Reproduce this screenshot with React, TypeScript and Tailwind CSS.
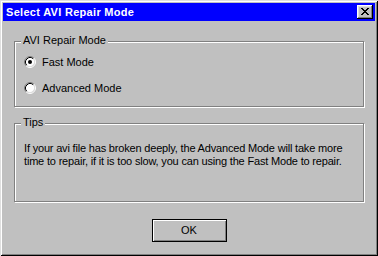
import { useState } from 'react'

function Radio({ checked }: { checked: boolean }) {
  return (
    <svg width="12" height="12" viewBox="0 0 12 12" className="shrink-0">
      <circle cx="6" cy="6" r="4.5" fill="#fff" />
      <path d="M2.11 9.89 A5.5 5.5 0 0 1 9.89 2.11" fill="none" stroke="#808080" strokeWidth="1" />
      <path d="M9.89 2.11 A5.5 5.5 0 0 1 2.11 9.89" fill="none" stroke="#fff" strokeWidth="1" />
      <path d="M2.82 9.18 A4.5 4.5 0 0 1 9.18 2.82" fill="none" stroke="#000" strokeWidth="1" />
      <path d="M9.18 2.82 A4.5 4.5 0 0 1 2.82 9.18" fill="none" stroke="#dfdfdf" strokeWidth="1" />
      {checked && <circle cx="6" cy="6" r="2" fill="#000" />}
    </svg>
  )
}

function GroupBox({ label, className, children }: { label: string; className: string; children: React.ReactNode }) {
  return (
    <div className={`relative border border-[#808080] shadow-[inset_1px_1px_#fff,1px_1px_#fff] ${className}`}>
      <span className="absolute left-[6px] top-[-8px] bg-[#c0c0c0] px-[2px] leading-[13px]">{label}</span>
      {children}
    </div>
  )
}

export default function App() {
  const [mode, setMode] = useState<'fast' | 'advanced'>('fast')

  return (
    <div className="flex h-[256px] w-[378px] flex-col bg-[#c0c0c0] p-[3px] font-['Liberation_Sans',Arial,sans-serif] text-[11px] text-black shadow-[inset_1px_1px_#dfdfdf,inset_-1px_-1px_#000,inset_2px_2px_#fff,inset_-2px_-2px_#808080]">
      {/* title bar */}
      <div className="flex h-[18px] items-center justify-between bg-[#0000ff] pl-[3px] pr-[2px]">
        <span className="text-[11px] font-bold leading-[18px] tracking-[0.3px] text-white">Select AVI Repair Mode</span>
        <button className="flex h-[14px] w-[16px] items-center justify-center bg-[#c0c0c0] shadow-[inset_-1px_-1px_#000,inset_1px_1px_#fff,inset_-2px_-2px_#808080,inset_2px_2px_#dfdfdf]">
          <svg width="8" height="7" viewBox="0 0 8 7" className="mb-[1px]">
            <path d="M0 0h2v1h-2zM6 0h2v1h-2zM1 1h2v1h-2zM5 1h2v1h-2zM2 2h4v1h-4zM3 3h2v1h-2zM2 4h4v1h-4zM1 5h2v1h-2zM5 5h2v1h-2zM0 6h2v1h-2zM6 6h2v1h-2z" fill="#000" />
          </svg>
        </button>
      </div>

      <div className="flex flex-col px-[11px]">
        <GroupBox label="AVI Repair Mode" className="mt-[20px] h-[66px]">
          <div className="flex flex-col gap-[12px] pl-[9px] pt-[13px]">
            <label className="flex h-[14px] items-center gap-[6px]" onClick={() => setMode('fast')}>
              <Radio checked={mode === 'fast'} />
              <span>Fast Mode</span>
            </label>
            <label className="flex h-[14px] items-center gap-[6px]" onClick={() => setMode('advanced')}>
              <Radio checked={mode === 'advanced'} />
              <span>Advanced Mode</span>
            </label>
          </div>
        </GroupBox>

        <GroupBox label="Tips" className="mt-[16px] h-[79px]">
          <p className="whitespace-nowrap pl-[9px] pt-[18px] leading-[13px] tracking-[-0.18px]">
            If your avi file has broken deeply, the Advanced Mode will take more
            <br />
            time to repair, if it is too slow, you can using the Fast Mode to repair.
          </p>
        </GroupBox>

        <div className="mt-[17px] flex justify-center">
          <button className="h-[23px] w-[75px] border border-black bg-[#c0c0c0] leading-[21px] shadow-[inset_1px_1px_#fff,inset_-1px_-1px_#808080]">
            OK
          </button>
        </div>
      </div>
    </div>
  )
}
